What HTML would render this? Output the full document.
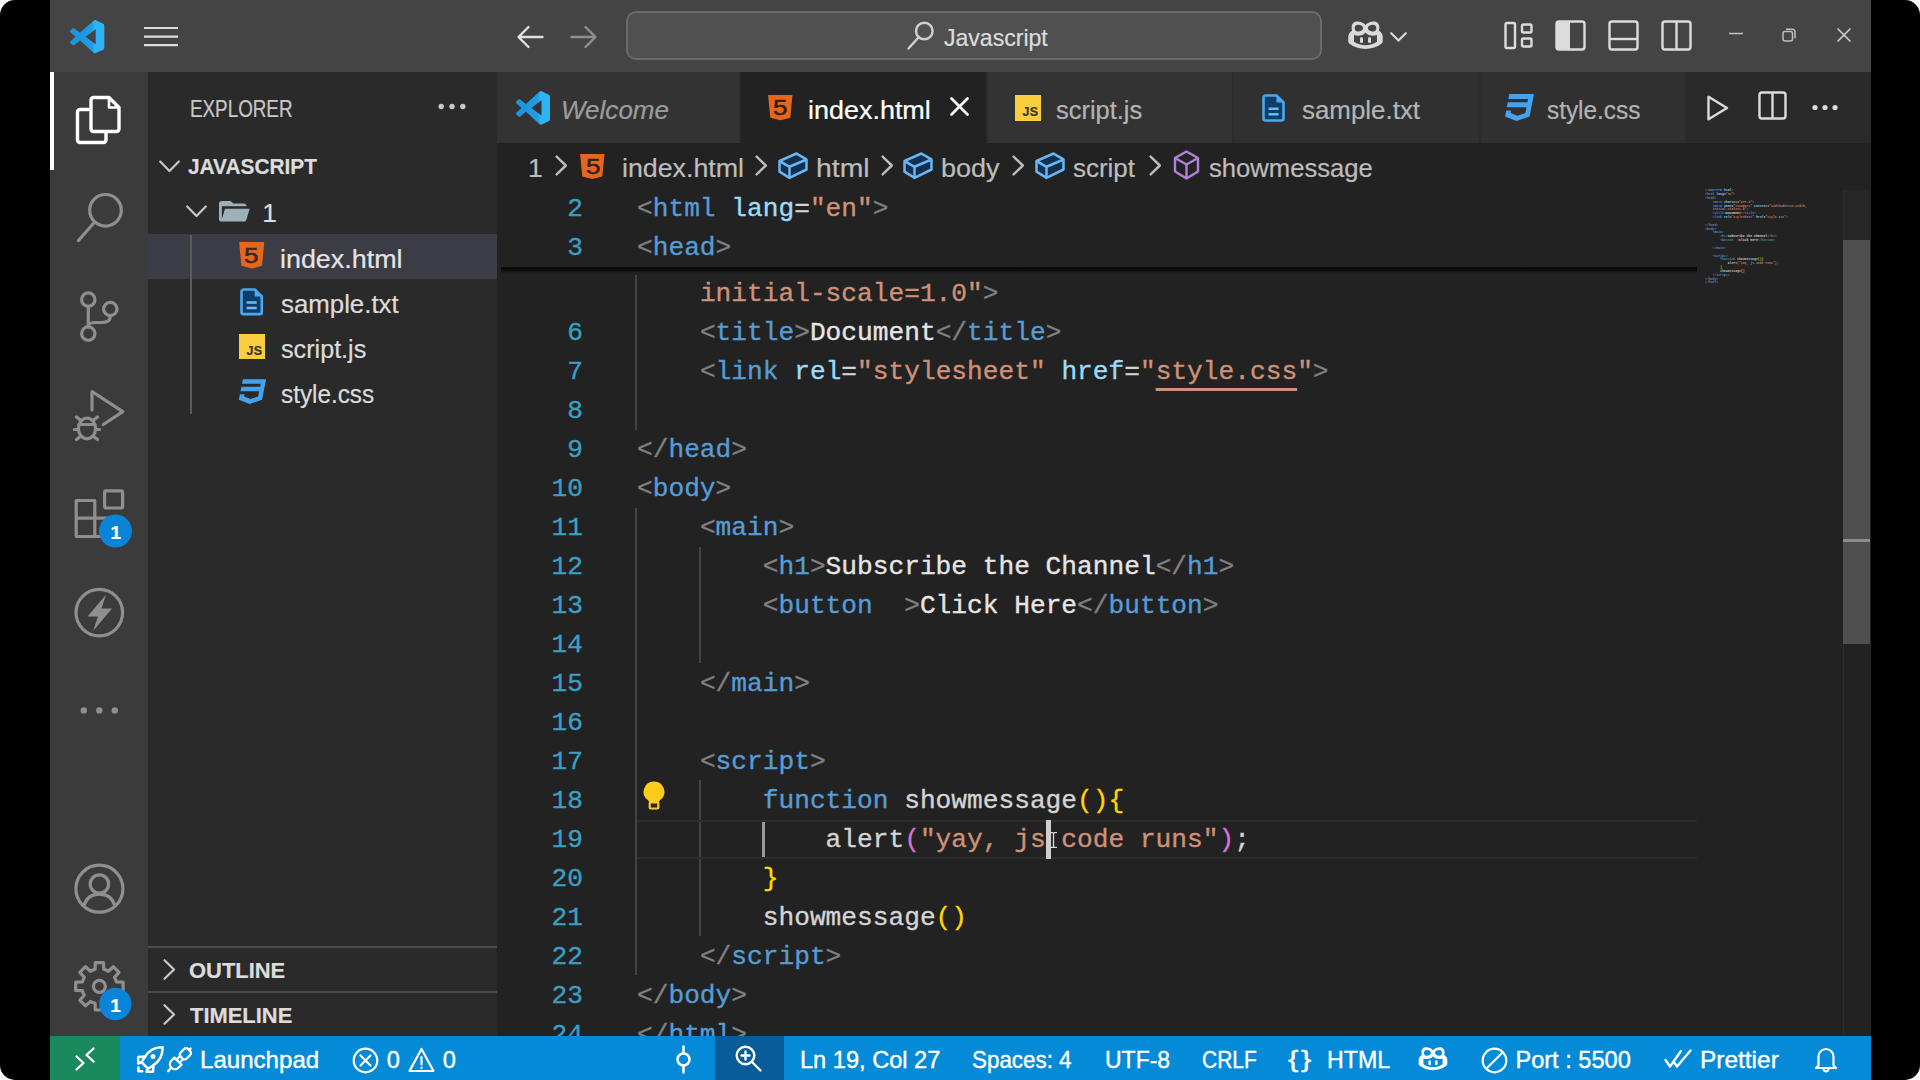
<!DOCTYPE html>
<html lang="en">
<head>
<meta charset="utf-8">
<title>index.html - Javascript - Visual Studio Code</title>
<style>
*{box-sizing:border-box;margin:0;padding:0}
html,body{width:1920px;height:1080px;overflow:hidden;background:#fff}
body{position:relative;font-family:"Liberation Sans",sans-serif;color:#ccc}
#win{position:absolute;left:50px;top:0;width:1821px;height:1080px;background:#222;overflow:hidden}
.abs{position:absolute}
.t{position:absolute;white-space:nowrap;line-height:1;transform:translateY(-50%);-webkit-text-stroke:.22px currentColor}
svg{position:absolute;overflow:visible}
/* regions (coords relative to #win: x = pagex-50) */
#title{left:0;top:0;width:1821px;height:72px;background:#444444}
#act{left:0;top:72px;width:98.400px;height:964px;background:#3b3b3b;z-index:1}
#side{left:98px;top:72px;width:349px;height:964px;background:#2a2a2a}
#tabs{left:447px;top:72px;width:1374px;height:71px;background:#2a2a2a}
#status{left:0;top:1035.5px;width:1821px;height:44.5px;background:#058ad8}
.tab{position:absolute;top:0;height:71px;background:#333;border-right:2px solid #2b2b2b}
.tab.on{background:#222}
.code,.ln{-webkit-text-stroke:.35px currentColor}
.code{font-family:"Liberation Mono",monospace;font-size:26.2px;white-space:pre;position:absolute;line-height:39px;height:39px;left:140px;color:#d4d4d4}
.ln{font-family:"Liberation Mono",monospace;font-size:26.2px;position:absolute;line-height:39px;height:39px;width:90px;left:-4px;text-align:right;color:#3b9fc4}
.g{color:#808080}.b{color:#569cd6}.a{color:#9cdcfe}.s{color:#ce9178}.y{color:#ffd700}.p{color:#da70d6}.f{color:#dcdcaa}.w{color:#d4d4d4}
.x{color:#e6e6e6}.u{text-decoration:underline;text-underline-offset:8.600px;text-decoration-thickness:2.500px;text-decoration-skip-ink:none}
.bc{font-size:26.600px;color:#bdbdbd}
.chev{stroke:#bdbdbd;stroke-width:2.200;fill:none;stroke-linecap:round;stroke-linejoin:round}
.cube{stroke:#6ab5f2;stroke-width:2.500;fill:#10304e;stroke-linejoin:round}
.fiv{font-size:22px;font-weight:normal;color:#2a211d;-webkit-text-stroke:.5px #2a211d;transform:translateY(-50%) scaleX(1.180);transform-origin:0 50%}
.jsx{font-size:12.500px;font-weight:bold;color:#3a3320;letter-spacing:.300px}
.st{color:#fff;font-size:24px;-webkit-text-stroke:.4px #fff}
</style>
</head>
<body>
<div class="abs" style="left:0;top:0;width:1920px;height:1080px;background:#000;border-radius:15px"></div>
<div id="win">
<div id="title" class="abs">
<svg style="left:19.500px;top:19.600px" width="34.300" height="33.600" viewBox="0 0 100 100" preserveAspectRatio="none"><defs><linearGradient id="vg" x1="0" y1="0" x2="1" y2="0"><stop offset="0" stop-color="#1b93da"/><stop offset="0.64" stop-color="#1f9ee6"/><stop offset="0.72" stop-color="#2cb4f6"/><stop offset="1" stop-color="#2db6f7"/></linearGradient></defs><path fill="url(#vg)" d="M96.46 10.8L75.86.88a6.23 6.23 0 0 0-7.11 1.2L29.3 38.06 12.12 25.02a4.16 4.16 0 0 0-5.32.23l-5.51 5.02a4.17 4.17 0 0 0 0 6.16L16.18 49.67 1.28 63.26a4.17 4.17 0 0 0 0 6.16l5.51 5.02a4.16 4.16 0 0 0 5.32.23L29.3 61.28l39.45 35.97a6.23 6.23 0 0 0 7.11 1.2l20.61-9.92a6.25 6.25 0 0 0 3.54-5.63V16.43a6.25 6.25 0 0 0-3.55-5.63zM75.02 72.03L45.07 49.67l29.95-22.37z"/></svg>
<svg style="left:94px;top:26px" width="34" height="22" viewBox="0 0 34 22" stroke="#dedede" stroke-width="2.2" fill="none"><path d="M0 2h34M0 10.6h34M0 19.2h34"/></svg>
<svg style="left:467px;top:25px" width="27" height="24" viewBox="0 0 27 24" stroke="#e0e0e0" stroke-width="2.4" fill="none" stroke-linecap="round" stroke-linejoin="round"><path d="M25.5 12H2M11.5 2L1.5 12l10 10"/></svg>
<svg style="left:520px;top:25px" width="27" height="24" viewBox="0 0 27 24" stroke="#8e8e8e" stroke-width="2.4" fill="none" stroke-linecap="round" stroke-linejoin="round"><path d="M1.5 12H25M15.5 2l10 10-10 10"/></svg>
<div class="abs" style="left:576px;top:11.400px;width:695.500px;height:49px;background:#505050;border:2px solid #6a6a6a;border-radius:10px"></div>
<svg style="left:857px;top:21px" width="28" height="29" viewBox="0 0 28 29" stroke="#d0d0d0" stroke-width="2.4" fill="none" stroke-linecap="round"><circle cx="17.3" cy="10" r="8.3"/><path d="M11.5 16.5L1.5 27.5"/></svg>
<span class="t" id="t_js" style="left:894.00px;top:38.70px;font-size:23.2px;color:#dcdcdc;transform:translateY(-50%) scaleX(0.9939);transform-origin:0 50%">Javascript</span>
<!-- copilot -->
<svg style="left:1298px;top:20px" width="35" height="30" viewBox="0 0 35 30"><path fill="#dadada" d="M9.5 1.5C5.5 1.5 3.6 4 3.6 7.6c0 1.2.2 2.3.5 3.2C1.8 12 .3 14.2.3 16.6v4.6c0 1 .5 2 1.3 2.6C5.8 27 11.4 29 17.5 29s11.700-2 15.900-5.200c.8-.6 1.300-1.600 1.300-2.600v-4.600c0-2.400-1.500-4.600-3.800-5.800.3-.9.5-2 .5-3.200 0-3.600-1.900-6.100-5.900-6.100-3.300 0-6 1.300-8 3.600-2-2.300-4.700-3.600-8-3.600z"/><path fill="#444" d="M10 4.700c-2.300 0-3.300 1.300-3.300 3.400 0 2.300.9 3.500 3.200 3.500 2.900 0 5.200-1.200 5.200-3.500 0-2-2.200-3.400-5.100-3.400zm15 0c-2.900 0-5.100 1.400-5.100 3.400 0 2.300 2.300 3.500 5.200 3.500 2.300 0 3.200-1.200 3.200-3.500 0-2.100-1-3.400-3.300-3.400zM6 15v6.800c3.300 2.300 7.300 3.500 11.500 3.500s8.200-1.200 11.500-3.500V15c-1.100.5-2.400.7-3.900.7-3.300 0-6-1.200-7.600-3.300-1.600 2.100-4.300 3.300-7.600 3.300-1.500 0-2.800-.2-3.900-.7z"/><rect x="12" y="17" width="3" height="6" rx="1.500" fill="#dadada"/><rect x="20" y="17" width="3" height="6" rx="1.500" fill="#dadada"/></svg>
<svg style="left:1340px;top:32px" width="17" height="10" viewBox="0 0 17 10" stroke="#d8d8d8" stroke-width="2.2" fill="none" stroke-linecap="round" stroke-linejoin="round"><path d="M1.2 1.200l7.300 7.300 7.300-7.300"/></svg>
<!-- layout icons -->
<svg style="left:1454px;top:21px" width="30" height="29" viewBox="0 0 30 29" stroke="#dcdcdc" stroke-width="2.4" fill="none"><rect x="1.5" y="2" width="9.500" height="25" rx="1.500"/><rect x="18" y="3.500" width="9.500" height="8" rx="1.500"/><rect x="18" y="17.500" width="9.500" height="8" rx="1.500"/></svg>
<svg style="left:1505px;top:20px" width="31" height="31" viewBox="0 0 31 31"><rect x="1.5" y="1.500" width="28" height="28" rx="2.500" stroke="#dcdcdc" stroke-width="2.4" fill="none"/><rect x="1.5" y="1.500" width="13.500" height="28" fill="#dcdcdc"/></svg>
<svg style="left:1558px;top:20px" width="31" height="31" viewBox="0 0 31 31" stroke="#dcdcdc" stroke-width="2.4" fill="none"><rect x="1.5" y="1.500" width="28" height="28" rx="2.500"/><path d="M1.500 19h28"/></svg>
<svg style="left:1611px;top:20px" width="31" height="31" viewBox="0 0 31 31" stroke="#dcdcdc" stroke-width="2.4" fill="none"><rect x="1.5" y="1.500" width="28" height="28" rx="2.500"/><path d="M15.500 1.500v28"/></svg>
<!-- window controls -->
<svg style="left:1679px;top:32px" width="14" height="3" viewBox="0 0 14 3"><path d="M0 1.500h14" stroke="#bdbdbd" stroke-width="1.6"/></svg>
<svg style="left:1732px;top:28px" width="14" height="14" viewBox="0 0 14 14" stroke="#bdbdbd" stroke-width="1.500" fill="none"><rect x="1" y="3.500" width="9.500" height="9.500" rx="2"/><path d="M4 1.200h6a3 3 0 0 1 3 3v6"/></svg>
<svg style="left:1787px;top:28px" width="14" height="14" viewBox="0 0 14 14" stroke="#cfcfcf" stroke-width="1.600" fill="none" stroke-linecap="round"><path d="M1 1l12 12M13 1L1 13"/></svg>
</div>
<div id="act" class="abs">
<div class="abs" style="left:0;top:0;width:4px;height:98px;background:#fff"></div>
<!-- files: page coords minus (50,72) -->
<svg style="left:0;top:0" width="98" height="964" viewBox="50 72 98 964" fill="none" stroke-linecap="round" stroke-linejoin="round">
<g stroke="#fff" stroke-width="3.4">
<path d="M88.500 109.500h-8.500a2.500 2.500 0 0 0-2.500 2.500v28a2.500 2.500 0 0 0 2.500 2.500h23.500a2.500 2.500 0 0 0 2.500-2.500v-7.500"/>
<path d="M93.500 97.500h15.500l10 10v21.500a2.500 2.500 0 0 1-2.500 2.500h-23a2.500 2.500 0 0 1-2.500-2.500v-29a2.500 2.500 0 0 1 2.500-2.500z"/>
<path d="M109 98v9.500h9.500" stroke-width="2.6"/>
</g>
<g stroke="#8f8f8f" stroke-width="3.2">
<circle cx="105.500" cy="210.300" r="15.800"/><path d="M94.200 222.500L78.500 240.500"/>
<!-- scm -->
<circle cx="88.300" cy="299.600" r="6.700"/><circle cx="88.300" cy="333.600" r="6.700"/><circle cx="110.300" cy="309" r="6.700"/>
<path d="M88.300 306.500v20.500M110.300 316c0 5-4 6.500-8 6.500h-6c-4 0-8 1-8 4"/>
<!-- debug -->
<path d="M92 410v-18.500l30.800 20.200-19.500 12.800"/>
<ellipse cx="87" cy="428.500" rx="8.600" ry="10.300"/><path d="M79 424.500h16M80.300 420l-3.800-3M93.700 420l3.800-3M78.400 429.500h-4M95.600 429.500h4M80.300 436.500l-3.800 3M93.700 436.500l3.800 3"/>
<!-- extensions -->
<path d="M76.200 500.500h18.600v36h-18.600zM76.200 518.200h37.200M94.800 518.200v18.300h18.600v-18.300" />
<rect x="104.600" y="490.800" width="18" height="17.200" rx="1.500"/>
<!-- lightning circle -->
<circle cx="99.300" cy="612.600" r="23.300"/>
<!-- account -->
<circle cx="99.400" cy="888.700" r="23.500"/><circle cx="99.400" cy="884" r="9.200"/><path d="M84 905.500c2.500-8 8.500-11.300 15.400-11.300s12.900 3.300 15.400 11.300"/>
</g>
<path fill="#8f8f8f" d="M106 594.800l-18.500 21.700h10.500l-5 14.500 19-22.500h-10.500z"/>
<g fill="#8f8f8f"><circle cx="83.800" cy="710.400" r="3.200"/><circle cx="99.300" cy="710.400" r="3.200"/><circle cx="114.800" cy="710.400" r="3.200"/></g>
<!-- gear -->
<g transform="translate(99.400 986.300)" stroke="#8f8f8f" stroke-width="3.2">
<circle r="6"/>
<path d="M-6.7 -16.2 L-4.3 -17.0 L-4.1 -23.7 L4.1 -23.7 L4.3 -17.0 L6.7 -16.2 L8.9 -15.1 L13.9 -19.6 L19.6 -13.9 L15.1 -8.9 L16.2 -6.7 L17.0 -4.3 L23.7 -4.1 L23.7 4.1 L17.0 4.3 L16.2 6.7 L15.1 8.9 L19.6 13.9 L13.9 19.6 L8.9 15.1 L6.7 16.2 L4.3 17.0 L4.1 23.7 L-4.1 23.7 L-4.3 17.0 L-6.7 16.2 L-8.9 15.1 L-13.9 19.6 L-19.6 13.9 L-15.1 8.9 L-16.2 6.7 L-17.0 4.3 L-23.7 4.1 L-23.7 -4.1 L-17.0 -4.3 L-16.2 -6.7 L-15.1 -8.9 L-19.6 -13.9 L-13.9 -19.6 L-8.9 -15.1Z"/>
</g>
<circle cx="115.500" cy="531" r="16.500" fill="#0a84d6"/><circle cx="115.300" cy="1004" r="16.200" fill="#0a84d6"/>
</svg>
<span class="t" style="left:60.500px;top:459.500px;font-size:19px;font-weight:bold;color:#fff">1</span>
<span class="t" style="left:60.300px;top:932.500px;font-size:19px;font-weight:bold;color:#fff">1</span>
</div>
<div id="side" class="abs">
<span class="t" id="t_expl" style="left:42.18px;top:37.10px;font-size:23.0px;color:#c8c8c8;transform:translateY(-50%) scaleX(0.8184);transform-origin:0 50%">EXPLORER</span>
<svg style="left:290px;top:31px" width="28" height="7" viewBox="0 0 28 7" fill="#c8c8c8"><circle cx="3.200" cy="3.500" r="2.700"/><circle cx="14" cy="3.500" r="2.700"/><circle cx="24.800" cy="3.500" r="2.700"/></svg>
<svg style="left:11px;top:87.500px" width="21" height="13" viewBox="0 0 21 13" stroke="#c8c8c8" stroke-width="2.200" fill="none" stroke-linecap="round" stroke-linejoin="round"><path d="M1.200 1.500l9.300 9.500 9.300-9.500"/></svg>
<span class="t" id="t_jsroot" style="left:40.20px;top:94.90px;font-size:21.8px;font-weight:bold;color:#dcdcdc;transform:translateY(-50%) scaleX(0.9563);transform-origin:0 50%">JAVASCRIPT</span>
<svg style="left:38px;top:132.500px" width="21" height="13" viewBox="0 0 21 13" stroke="#c8c8c8" stroke-width="2.200" fill="none" stroke-linecap="round" stroke-linejoin="round"><path d="M1.200 1.500l9.300 9.500 9.300-9.500"/></svg>
<svg style="left:71.300px;top:129px" width="30.800" height="20.600" viewBox="2 4 21.300 16" preserveAspectRatio="none"><path fill="#9db0b9" d="M19 20H4a2 2 0 0 1-2-2V6c0-1.110.890-2 2-2h6l2 2h7a2 2 0 0 1 2 2H4v10l2.140-8h17.070l-2.280 8.500c-.230.870-1.010 1.500-1.930 1.500z"/></svg>
<span class="t" id="t_f1" style="left:114.15px;top:141.10px;font-size:26.4px;color:#dcdcdc">1</span>
<div class="abs" style="left:0;top:161.600px;width:349px;height:45px;background:#3c3c44"></div>
<div class="abs" style="left:41.500px;top:162.500px;width:2px;height:179px;background:#5a5a5a"></div>
<!-- html5 -->
<svg style="left:90.900px;top:170.300px" width="25.400" height="26.500" viewBox="4 3 16 18" preserveAspectRatio="none"><path fill="#e8661c" d="M4.070 3h15.860L18.500 19.200 12 21l-6.500-1.800z"/></svg>
<span class="t fiv" style="left:96.400px;top:184.400px;color:#3c2a28">5</span>
<span class="t" id="t_s1" style="left:131.68px;top:186.60px;font-size:26.4px;color:#e4e4e4;transform:translateY(-50%) scaleX(1.0184);transform-origin:0 50%">index.html</span>
<!-- txt -->
<svg style="left:92px;top:216px" width="23.300" height="27.600" viewBox="0 0 23 28" preserveAspectRatio="none"><path d="M3.500 1.500h11l7 7v16a2 2 0 0 1-2 2h-16a2 2 0 0 1-2-2v-21a2 2 0 0 1 2-2z" fill="#0f3d66" stroke="#4aa8f0" stroke-width="2.600" stroke-linejoin="round"/><path d="M14.500 1.500v7h7z" fill="#4aa8f0"/><path d="M6.500 14.700h10M6.500 20.300h10" stroke="#6dbbf5" stroke-width="2.400"/></svg>
<span class="t" id="t_s2" style="left:132.70px;top:232.10px;font-size:26.4px;color:#dcdcdc;transform:translateY(-50%) scaleX(0.9782);transform-origin:0 50%">sample.txt</span>
<!-- js -->
<div class="abs" style="left:90.500px;top:262px;width:26px;height:25px;background:#fbce3f"></div>
<span class="t" style="left:98.500px;top:279px;font-size:12.500px;font-weight:bold;color:#3a3320;letter-spacing:0.3px">JS</span>
<span class="t" id="t_s3" style="left:132.70px;top:277.10px;font-size:26.4px;color:#dcdcdc;transform:translateY(-50%) scaleX(0.9535);transform-origin:0 50%">script.js</span>
<!-- css -->
<svg style="left:88px;top:303px" width="33" height="33" viewBox="0 0 24 24"><path fill="#45a3ee" d="M5 3l-.650 3.340h13.590L17.500 8.500H3.920l-.660 3.330h13.590l-.760 3.810-5.480 1.810-4.750-1.810.330-1.640H2.850l-.790 4 7.850 3 9.050-3 1.200-6.030.240-1.210L21.940 3H5z"/></svg>
<span class="t" id="t_s4" style="left:132.70px;top:322.10px;font-size:26.4px;color:#dcdcdc;transform:translateY(-50%) scaleX(0.9199);transform-origin:0 50%">style.css</span>
<!-- outline / timeline -->
<div class="abs" style="left:0;top:874px;width:349px;height:2px;background:#4d4d4d"></div>
<div class="abs" style="left:0;top:919px;width:349px;height:2px;background:#4d4d4d"></div>
<svg style="left:15px;top:886.500px" width="13" height="21" viewBox="0 0 13 21" stroke="#c8c8c8" stroke-width="2.200" fill="none" stroke-linecap="round" stroke-linejoin="round"><path d="M1.500 1.200l9.500 9.300-9.500 9.300"/></svg>
<svg style="left:15px;top:931.500px" width="13" height="21" viewBox="0 0 13 21" stroke="#c8c8c8" stroke-width="2.200" fill="none" stroke-linecap="round" stroke-linejoin="round"><path d="M1.500 1.200l9.500 9.300-9.500 9.300"/></svg>
<span class="t" id="t_outl" style="left:41.30px;top:898.90px;font-size:21.8px;font-weight:bold;color:#dcdcdc;transform:translateY(-50%) scaleX(1.0061);transform-origin:0 50%">OUTLINE</span>
<span class="t" id="t_time" style="left:42.00px;top:943.90px;font-size:21.8px;font-weight:bold;color:#dcdcdc;transform:translateY(-50%) scaleX(1.0052);transform-origin:0 50%">TIMELINE</span>
</div>
<div id="tabs" class="abs">
<div class="tab" style="left:0;width:244.400px"></div>
<div class="tab on" style="left:244.400px;width:246.600px"></div>
<div class="tab" style="left:491px;width:245.750px"></div>
<div class="tab" style="left:736.750px;width:246.750px;background:#303030"></div>
<div class="tab" style="left:983.500px;width:206px;background:#303030"></div>
<!-- welcome -->
<svg style="left:19px;top:18.600px" width="34" height="34" viewBox="0 0 100 100" preserveAspectRatio="none"><path fill="url(#vg)" d="M96.460 10.800L75.860.880a6.230 6.230 0 0 0-7.110 1.200L29.300 38.060 12.120 25.020a4.160 4.160 0 0 0-5.320.230l-5.510 5.020a4.170 4.170 0 0 0 0 6.160L16.180 49.670 1.280 63.260a4.170 4.170 0 0 0 0 6.160l5.510 5.020a4.160 4.160 0 0 0 5.320.230L29.300 61.280l39.450 35.970a6.230 6.230 0 0 0 7.110 1.200l20.610-9.920a6.250 6.250 0 0 0 3.540-5.630V16.430a6.250 6.250 0 0 0-3.550-5.630zM75.020 72.030L45.070 49.670l29.950-22.370z"/></svg>
<span class="t" id="t_welcome" style="left:63.63px;top:38.30px;font-size:26.4px;font-style:italic;color:#9c9c9c;transform:translateY(-50%) scaleX(0.9866);transform-origin:0 50%">Welcome</span>
<!-- index.html -->
<svg style="left:270.700px;top:22.500px" width="24.600" height="25.300" viewBox="4 3 16 18" preserveAspectRatio="none"><path fill="#e8661c" d="M4.070 3h15.860L18.500 19.200 12 21l-6.500-1.800z"/></svg>
<span class="t fiv" style="left:275.800px;top:35.600px">5</span>
<span class="t" id="t_tab1" style="left:310.88px;top:38.30px;font-size:26.4px;color:#fff;transform:translateY(-50%) scaleX(1.0210);transform-origin:0 50%">index.html</span>
<svg style="left:452.800px;top:24.600px" width="19" height="19" viewBox="0 0 19 19" stroke="#f4f4f4" stroke-width="2.800" fill="none" stroke-linecap="round"><path d="M1.500 1.500l16 16M17.500 1.500l-16 16"/></svg>
<!-- script.js -->
<div class="abs" style="left:517.500px;top:22.500px;width:26px;height:26px;background:#fbce3f"></div>
<span class="t jsx" style="left:525.500px;top:40px">JS</span>
<span class="t" id="t_tab2" style="left:559.25px;top:38.30px;font-size:26.4px;color:#b4b4b4;transform:translateY(-50%) scaleX(0.9631);transform-origin:0 50%">script.js</span>
<!-- sample.txt -->
<svg style="left:765px;top:22px" width="23" height="28" viewBox="0 0 23 28"><path d="M3.500 1.500h11l7 7v16a2 2 0 0 1-2 2h-16a2 2 0 0 1-2-2v-21a2 2 0 0 1 2-2z" fill="#0f3d66" stroke="#4aa8f0" stroke-width="2.600" stroke-linejoin="round"/><path d="M14.500 1.500v7h7z" fill="#4aa8f0"/><path d="M6.500 14.700h10M6.500 20.300h10" stroke="#6dbbf5" stroke-width="2.400"/></svg>
<span class="t" id="t_tab3" style="left:804.60px;top:38.30px;font-size:26.4px;color:#b4b4b4;transform:translateY(-50%) scaleX(0.9815);transform-origin:0 50%">sample.txt</span>
<!-- style.css -->
<svg style="left:1007.500px;top:21.500px" width="29" height="27" viewBox="2 3 20 18" preserveAspectRatio="none"><path fill="#45a3ee" d="M5 3l-.650 3.340h13.590L17.500 8.500H3.920l-.660 3.330h13.590l-.760 3.810-5.480 1.810-4.750-1.810.330-1.640H2.850l-.790 4 7.850 3 9.050-3 1.200-6.030.240-1.210L21.940 3H5z"/></svg>
<span class="t" id="t_tab4" style="left:1050.30px;top:38.30px;font-size:26.4px;color:#b4b4b4;transform:translateY(-50%) scaleX(0.9229);transform-origin:0 50%">style.css</span>
<!-- actions -->
<svg style="left:1210px;top:22.500px" width="22" height="26" viewBox="0 0 22 26" stroke="#dcdcdc" stroke-width="2.400" fill="none" stroke-linejoin="round"><path d="M1.500 1.800v22.400L20 13z"/></svg>
<svg style="left:1261px;top:19.200px" width="29" height="29" viewBox="0 0 29 29" stroke="#dcdcdc" stroke-width="2.400" fill="none"><rect x="1.500" y="1.500" width="26" height="26" rx="2.500"/><path d="M14.500 1.500v26"/></svg>
<svg style="left:1315px;top:31.500px" width="26" height="7" viewBox="0 0 26 7" fill="#dcdcdc"><circle cx="3" cy="3.500" r="2.600"/><circle cx="13" cy="3.500" r="2.600"/><circle cx="23" cy="3.500" r="2.600"/></svg>
</div>
<div id="crumbs" class="abs" style="left:447px;top:142px;width:1373px;height:48px">
<span class="t bc" id="t_b0" style="left:31.08px;top:26.20px;font-size:26.4px">1</span>
<svg class="chev" style="left:58.0px;top:13.300px" width="13" height="21" viewBox="0 0 12 19" preserveAspectRatio="none"><path d="M1.500 1.500l8.500 8-8.500 8"/></svg>
<svg style="left:83.400px;top:12.300px" width="24.600" height="25" viewBox="4 3 16 18" preserveAspectRatio="none"><path fill="#e8661c" d="M4.070 3h15.860L18.500 19.200 12 21l-6.500-1.800z"/></svg>
<span class="t fiv" style="left:88.500px;top:25.300px">5</span>
<span class="t bc" id="t_b1" style="left:124.89px;top:26.20px;font-size:26.4px;transform:translateY(-50%) scaleX(1.0142);transform-origin:0 50%">index.html</span>
<svg class="chev" style="left:258.0px;top:13.300px" width="13" height="21" viewBox="0 0 12 19" preserveAspectRatio="none"><path d="M1.500 1.500l8.500 8-8.500 8"/></svg>
<svg class="cube" style="left:281px;top:10.300px" width="30" height="27.500" viewBox="0 0 30 26" preserveAspectRatio="none"><path d="M1.500 8.500L18.500 1.500l10 5.500v9.500L11.500 24.500l-10-6z"/><path fill="none" d="M1.500 8.500l10 5.500 17-7M11.500 14v10.500"/></svg>
<span class="t bc" id="t_b2" style="left:318.63px;top:26.20px;font-size:26.4px;transform:translateY(-50%) scaleX(1.0741);transform-origin:0 50%">html</span>
<svg class="chev" style="left:383.5px;top:13.300px" width="13" height="21" viewBox="0 0 12 19" preserveAspectRatio="none"><path d="M1.500 1.500l8.500 8-8.500 8"/></svg>
<svg class="cube" style="left:406px;top:10.300px" width="30" height="27.500" viewBox="0 0 30 26" preserveAspectRatio="none"><path d="M1.500 8.500L18.500 1.500l10 5.500v9.500L11.500 24.500l-10-6z"/><path fill="none" d="M1.500 8.500l10 5.500 17-7M11.500 14v10.500"/></svg>
<span class="t bc" id="t_b3" style="left:443.68px;top:26.20px;font-size:26.4px;transform:translateY(-50%) scaleX(1.0222);transform-origin:0 50%">body</span>
<svg class="chev" style="left:514.5px;top:13.300px" width="13" height="21" viewBox="0 0 12 19" preserveAspectRatio="none"><path d="M1.500 1.500l8.500 8-8.500 8"/></svg>
<svg class="cube" style="left:538px;top:10.300px" width="30" height="27.500" viewBox="0 0 30 26" preserveAspectRatio="none"><path d="M1.500 8.500L18.500 1.500l10 5.500v9.500L11.500 24.500l-10-6z"/><path fill="none" d="M1.500 8.500l10 5.500 17-7M11.500 14v10.500"/></svg>
<span class="t bc" id="t_b4" style="left:576.40px;top:26.20px;font-size:26.4px;transform:translateY(-50%) scaleX(0.9824);transform-origin:0 50%">script</span>
<svg class="chev" style="left:651.5px;top:13.300px" width="13" height="21" viewBox="0 0 12 19" preserveAspectRatio="none"><path d="M1.500 1.500l8.500 8-8.500 8"/></svg>
<svg style="left:675.500px;top:7.600px" width="27" height="30" viewBox="0 0 27 30" stroke="#b180d7" stroke-width="2.400" fill="none" stroke-linejoin="round"><path d="M13.500 1.500l11.500 6.500v13.500l-11.500 7-11.500-7V8zM2 8l11.500 6.500L25 8M13.500 14.500v14"/></svg>
<span class="t bc" id="t_b5" style="left:711.75px;top:26.20px;font-size:26.4px;transform:translateY(-50%) scaleX(0.9710);transform-origin:0 50%">showmessage</span>
</div>
<div id="editor" class="abs" style="left:447px;top:190px;width:1373px;height:846px;overflow:hidden">
<div class="abs" style="left:0;top:0;width:1373px;height:846px" id="ed">
<div class="abs" style="left:138px;top:85px;width:2px;height:155px;background:#434343"></div>
<div class="abs" style="left:138px;top:318px;width:2px;height:467px;background:#434343"></div>
<div class="abs" style="left:202px;top:357px;width:2px;height:116px;background:#434343"></div>
<div class="abs" style="left:202px;top:590px;width:2px;height:156px;background:#434343"></div>
<div class="abs" style="left:265px;top:630px;width:3px;height:38px;background:#9a9a9a"></div>
<div class="abs" style="left:140px;top:630px;width:1060px;height:2px;background:#2c2c2c"></div>
<div class="abs" style="left:140px;top:667px;width:1060px;height:2px;background:#2c2c2c"></div>
<div class="ln" style="top:84.5px"></div><div class="code" style="top:84.5px">    <span class="s">initial-scale=1.0"</span><span class="g">&gt;</span></div>
<div class="ln" style="top:123.5px">6</div><div class="code" style="top:123.5px">    <span class="g">&lt;</span><span class="b">title</span><span class="g">&gt;</span><span class="x">Document</span><span class="g">&lt;/</span><span class="b">title</span><span class="g">&gt;</span></div>
<div class="ln" style="top:162.5px">7</div><div class="code" style="top:162.5px">    <span class="g">&lt;</span><span class="b">link</span> <span class="a">rel</span>=<span class="s">"stylesheet"</span> <span class="a">href</span>=<span class="s">"<span class="u">style.css</span>"</span><span class="g">&gt;</span></div>
<div class="ln" style="top:201.5px">8</div><div class="code" style="top:201.5px"></div>
<div class="ln" style="top:240.5px">9</div><div class="code" style="top:240.5px"><span class="g">&lt;/</span><span class="b">head</span><span class="g">&gt;</span></div>
<div class="ln" style="top:279.5px">10</div><div class="code" style="top:279.5px"><span class="g">&lt;</span><span class="b">body</span><span class="g">&gt;</span></div>
<div class="ln" style="top:318.5px">11</div><div class="code" style="top:318.5px">    <span class="g">&lt;</span><span class="b">main</span><span class="g">&gt;</span></div>
<div class="ln" style="top:357.5px">12</div><div class="code" style="top:357.5px">        <span class="g">&lt;</span><span class="b">h1</span><span class="g">&gt;</span><span class="x">Subscribe the Channel</span><span class="g">&lt;/</span><span class="b">h1</span><span class="g">&gt;</span></div>
<div class="ln" style="top:396.5px">13</div><div class="code" style="top:396.5px">        <span class="g">&lt;</span><span class="b">button</span>  <span class="g">&gt;</span><span class="x">Click Here</span><span class="g">&lt;/</span><span class="b">button</span><span class="g">&gt;</span></div>
<div class="ln" style="top:435.5px">14</div><div class="code" style="top:435.5px"></div>
<div class="ln" style="top:474.5px">15</div><div class="code" style="top:474.5px">    <span class="g">&lt;/</span><span class="b">main</span><span class="g">&gt;</span></div>
<div class="ln" style="top:513.5px">16</div><div class="code" style="top:513.5px"></div>
<div class="ln" style="top:552.5px">17</div><div class="code" style="top:552.5px">    <span class="g">&lt;</span><span class="b">script</span><span class="g">&gt;</span></div>
<div class="ln" style="top:591.5px">18</div><div class="code" style="top:591.5px">        <span class="b">function</span> <span class="w">showmessage</span><span class="y">(){</span></div>
<div class="ln" style="top:630.5px">19</div><div class="code" style="top:630.5px">            <span class="w">alert</span><span class="p">(</span><span class="s">"yay, js code runs"</span><span class="p">)</span><span class="w">;</span></div>
<div class="ln" style="top:669.5px">20</div><div class="code" style="top:669.5px">        <span class="y">}</span></div>
<div class="ln" style="top:708.5px">21</div><div class="code" style="top:708.5px">        <span class="w">showmessage</span><span class="y">()</span></div>
<div class="ln" style="top:747.5px">22</div><div class="code" style="top:747.5px">    <span class="g">&lt;/</span><span class="b">script</span><span class="g">&gt;</span></div>
<div class="ln" style="top:786.5px">23</div><div class="code" style="top:786.5px"><span class="g">&lt;/</span><span class="b">body</span><span class="g">&gt;</span></div>
<div class="ln" style="top:825.5px">24</div><div class="code" style="top:825.5px"><span class="g">&lt;/</span><span class="b">html</span><span class="g">&gt;</span></div>
<div class="abs" style="left:4px;top:76px;width:1196px;height:7px;background:linear-gradient(#0a0a0a,#0a0a0a 55%,rgba(10,10,10,0))"></div><div class="abs" style="left:0;top:0;width:1200px;height:77px;background:#222"></div>
<div class="ln" style="top:-0.5px">2</div><div class="code" style="top:-0.5px"><span class="g">&lt;</span><span class="b">html</span> <span class="a">lang</span>=<span class="s">"en"</span><span class="g">&gt;</span></div>
<div class="ln" style="top:38.5px">3</div><div class="code" style="top:38.5px"><span class="g">&lt;</span><span class="b">head</span><span class="g">&gt;</span></div>
<div class="abs" style="left:1346px;top:-1px;width:27px;height:51px;background:#272727;border-left:1px solid #2e2e2e"></div>
<div class="abs" style="left:1346px;top:454px;width:1px;height:392px;background:#2c2c2c"></div>
<div class="abs" style="left:1346px;top:50px;width:27px;height:404px;background:#4f4f4f"></div>
<div class="abs" style="left:1346px;top:348.5px;width:27px;height:3px;background:#8c8c8c"></div>
<svg style="left:146px;top:590.5px" width="22" height="29" viewBox="0 0 22 29"><path d="M11 .5a10.300 10.300 0 0 0-6.200 18.600c.8.600 1.200 1.300 1.200 2.100h10c0-.8.400-1.500 1.200-2.100A10.300 10.300 0 0 0 11 .5z" fill="#fccb1c"/><rect x="6.700" y="21.500" width="8.600" height="6" rx="1" fill="none" stroke="#fccb1c" stroke-width="2.200"/></svg>
<svg style="left:551.5px;top:642px" width="9" height="16" viewBox="0 0 9 16" stroke="#d8d8d8" stroke-width="1.300" fill="none"><path d="M1 .7h2.500q1 0 1 1v12.600q0 1-1 1h-2.500M8 .7h-2.500q-1 0-1 1M8 15.300h-2.500q-1 0-1-1"/></svg>
<div class="abs" style="left:549px;top:630px;width:4.5px;height:39px;background:#cfcfcf"></div>
</div></div>
<div id="mini" class="abs" style="left:1655px;top:189.200px;width:140px;font-family:'Liberation Mono',monospace;font-weight:bold;font-size:3.15px;line-height:3.850px;white-space:pre;color:#d4d4d4;opacity:.85"><span class="g">&lt;!</span><span class="b">DOCTYPE</span> <span class="a">html</span><span class="g">&gt;</span>
<span class="g">&lt;</span><span class="b">html</span> <span class="a">lang</span>=<span class="s">"en"</span><span class="g">&gt;</span>
<span class="g">&lt;</span><span class="b">head</span><span class="g">&gt;</span>
    <span class="g">&lt;</span><span class="b">meta</span> <span class="a">charset</span>=<span class="s">"UTF-8"</span><span class="g">&gt;</span>
    <span class="g">&lt;</span><span class="b">meta</span> <span class="a">name</span>=<span class="s">"viewport"</span> <span class="a">content</span>=<span class="s">"width=device-width,</span>
    <span class="s">initial-scale=1.0"</span><span class="g">&gt;</span>
    <span class="g">&lt;</span><span class="b">title</span><span class="g">&gt;</span><span class="x">Document</span><span class="g">&lt;/</span><span class="b">title</span><span class="g">&gt;</span>
    <span class="g">&lt;</span><span class="b">link</span> <span class="a">rel</span>=<span class="s">"stylesheet"</span> <span class="a">href</span>=<span class="s">"style.css"</span><span class="g">&gt;</span>

<span class="g">&lt;/</span><span class="b">head</span><span class="g">&gt;</span>
<span class="g">&lt;</span><span class="b">body</span><span class="g">&gt;</span>
    <span class="g">&lt;</span><span class="b">main</span><span class="g">&gt;</span>
        <span class="g">&lt;</span><span class="b">h1</span><span class="g">&gt;</span><span class="x">Subscribe the Channel</span><span class="g">&lt;/</span><span class="b">h1</span><span class="g">&gt;</span>
        <span class="g">&lt;</span><span class="b">button</span>  <span class="g">&gt;</span><span class="x">Click Here</span><span class="g">&lt;/</span><span class="b">button</span><span class="g">&gt;</span>

    <span class="g">&lt;/</span><span class="b">main</span><span class="g">&gt;</span>

    <span class="g">&lt;</span><span class="b">script</span><span class="g">&gt;</span>
        <span class="b">function</span> <span class="w">showmessage</span><span class="y">(){</span>
            <span class="w">alert</span><span class="p">(</span><span class="s">"yay, js code runs"</span><span class="p">)</span><span class="w">;</span>
        <span class="y">}</span>
        <span class="w">showmessage</span><span class="y">()</span>
    <span class="g">&lt;/</span><span class="b">script</span><span class="g">&gt;</span>
<span class="g">&lt;/</span><span class="b">body</span><span class="g">&gt;</span>
<span class="g">&lt;/</span><span class="b">html</span><span class="g">&gt;</span></div>
<div id="status" class="abs">
<div class="abs" style="left:0;top:0;width:70px;height:44px;background:#1a8a5e"></div>
<div class="abs" style="left:665px;top:0;width:69px;height:44px;background:#075c99"></div>
<svg style="left:25px;top:11px" width="20" height="24" viewBox="0 0 20 24" stroke="#fff" stroke-width="2.300" fill="none" stroke-linecap="round" stroke-linejoin="round"><path d="M1.500 9.500l7 6.500-7 6.500M18.500 1.500l-7 6.500 7 6.500"/></svg>
<!-- rocket -->
<svg style="left:0;top:0" width="200" height="44" viewBox="0 0 200 44" stroke="#fff" stroke-width="2.500" fill="none" stroke-linecap="round" stroke-linejoin="round"><path d="M112.600 11.300c-7.500-.300-13.500 3-17.800 9.700l-3.300 5.200 6.500 6.500 5.200-3.300c6.700-4.300 9.700-10.300 9.400-18.100zM94.500 20.500l-6.300.500v6.500l3.500-1.200M103.500 29.500l-.500 6.300h-6.500l1.200-3.500M88.400 31.500v3.700h3.900"/><circle cx="103" cy="20.500" r="1.700" fill="#fff" stroke-width="1.600"/>
<g transform="translate(129.300 23.900) rotate(45) scale(.93)"><rect x="-4.600" y="-15" width="9.200" height="11.500" rx="3.200"/><path d="M-5.400 2h10.800v4.600a5.400 5.400 0 0 1-10.800 0zM-2.300 -3.500v5.500M2.300 -3.500v5.500M0 12v5M0 -15v-2.300"/></g></svg>
<span class="t st" id="t_st1" style="left:149.98px;top:25.30px;font-size:23.6px;transform:translateY(-50%) scaleX(1.0205);transform-origin:0 50%">Launchpad</span>
<svg style="left:302px;top:11px" width="27" height="27" viewBox="0 0 27 27" stroke="#fff" stroke-width="2.200" fill="none" stroke-linecap="round"><circle cx="13.500" cy="13.500" r="11.800"/><path d="M8.500 8.500l10 10M18.500 8.500l-10 10"/></svg>
<span class="t st" id="t_st2" style="left:336.65px;top:25.30px;font-size:23.6px">0</span>
<svg style="left:358px;top:11px" width="27" height="26" viewBox="0 0 27 26" stroke="#fff" stroke-width="2.200" fill="none" stroke-linecap="round" stroke-linejoin="round"><path d="M13.500 2L25.500 24h-24zM13.500 10v7.500M13.500 20.500v.500"/></svg>
<span class="t st" id="t_st3" style="left:392.65px;top:25.30px;font-size:23.6px">0</span>
<svg style="left:625px;top:9px" width="17" height="29" viewBox="0 0 17 29" stroke="#fff" stroke-width="2.500" fill="none" stroke-linecap="round"><circle cx="8.500" cy="14.500" r="6"/><path d="M8.500 1.500v7M8.500 20.500v7"/></svg>
<svg style="left:685px;top:9px" width="27" height="27" viewBox="0 0 27 27" stroke="#fff" stroke-width="2.400" fill="none" stroke-linecap="round"><circle cx="10.500" cy="10.500" r="8.800"/><path d="M17 17l8.500 8.500M6.500 10.500h8M10.500 6.500v8"/></svg>
<span class="t st" id="t_st4" style="left:750.00px;top:25.30px;font-size:23.6px">Ln 19, Col 27</span>
<span class="t st" id="t_st5" style="left:922.45px;top:25.30px;font-size:23.6px;transform:translateY(-50%) scaleX(0.9489);transform-origin:0 50%">Spaces: 4</span>
<span class="t st" id="t_st6" style="left:1055.28px;top:25.30px;font-size:23.6px;transform:translateY(-50%) scaleX(0.9746);transform-origin:0 50%">UTF-8</span>
<span class="t st" id="t_st7" style="left:1152.11px;top:25.30px;font-size:23.6px;transform:translateY(-50%) scaleX(0.8887);transform-origin:0 50%">CRLF</span>
<span class="t st" id="t_st8" style="left:1238.00px;top:24.30px;letter-spacing:2px;font-size:23.6px;transform:translateY(-50%) scaleX(1.3087);transform-origin:0 50%">{}</span>
<span class="t st" id="t_st9" style="left:1276.52px;top:25.30px;font-size:23.6px;transform:translateY(-50%) scaleX(0.9825);transform-origin:0 50%">HTML</span>
<!-- copilot small -->
<svg style="left:1368px;top:10px" width="30" height="25" viewBox="0 0 35 30"><path fill="#fff" d="M9.500 1.500C5.500 1.500 3.600 4 3.600 7.600c0 1.200.2 2.300.5 3.200C1.800 12 .3 14.200.3 16.600v4.600c0 1 .5 2 1.300 2.600C5.800 27 11.400 29 17.500 29s11.700-2 15.900-5.200c.8-.6 1.300-1.600 1.300-2.600v-4.600c0-2.400-1.500-4.600-3.800-5.800.3-.9.500-2 .5-3.200 0-3.600-1.900-6.100-5.900-6.100-3.300 0-6 1.300-8 3.600-2-2.300-4.700-3.600-8-3.600z"/><path fill="#058ad8" d="M10 4.700c-2.300 0-3.300 1.300-3.300 3.400 0 2.300.9 3.500 3.200 3.500 2.900 0 5.200-1.200 5.200-3.500 0-2-2.200-3.400-5.100-3.400zm15 0c-2.900 0-5.100 1.400-5.100 3.400 0 2.300 2.300 3.500 5.200 3.500 2.300 0 3.200-1.200 3.200-3.500 0-2.100-1-3.400-3.300-3.400zM6 15v6.800c3.300 2.300 7.300 3.500 11.500 3.500s8.200-1.200 11.500-3.500V15c-1.100.5-2.400.7-3.900.7-3.300 0-6-1.200-7.600-3.300-1.600 2.100-4.300 3.300-7.600 3.300-1.500 0-2.800-.2-3.900-.7z"/><rect x="12" y="17" width="3" height="6" rx="1.500" fill="#fff"/><rect x="20" y="17" width="3" height="6" rx="1.500" fill="#fff"/></svg>
<svg style="left:1431px;top:11px" width="27" height="27" viewBox="0 0 27 27" stroke="#fff" stroke-width="2.200" fill="none" stroke-linecap="round"><circle cx="13.500" cy="13.500" r="11.800"/><path d="M5.500 21.500l16-16"/></svg>
<span class="t st" id="t_st10" style="left:1465.40px;top:25.30px;font-size:23.6px">Port : 5500</span>
<svg style="left:1614px;top:13px" width="28" height="20" viewBox="0 0 28 20" stroke="#fff" stroke-width="2.300" fill="none" stroke-linecap="round" stroke-linejoin="round"><path d="M1.500 11l4.500 6.500L17 2M9.500 12.500l3.500 5L26.500 1.500"/></svg>
<span class="t st" id="t_st11" style="left:1649.96px;top:25.30px;font-size:23.6px;transform:translateY(-50%) scaleX(1.0361);transform-origin:0 50%">Prettier</span>
<svg style="left:1764px;top:10px" width="24" height="27" viewBox="0 0 24 27" stroke="#fff" stroke-width="2.200" fill="none" stroke-linecap="round" stroke-linejoin="round"><path d="M4.500 19.500v-9a7.500 7.500 0 0 1 15 0v9l2.500 2.500h-20zM9.500 23.500a2.600 2.600 0 0 0 5 0"/></svg>
</div>
</div>
</body>
</html>
